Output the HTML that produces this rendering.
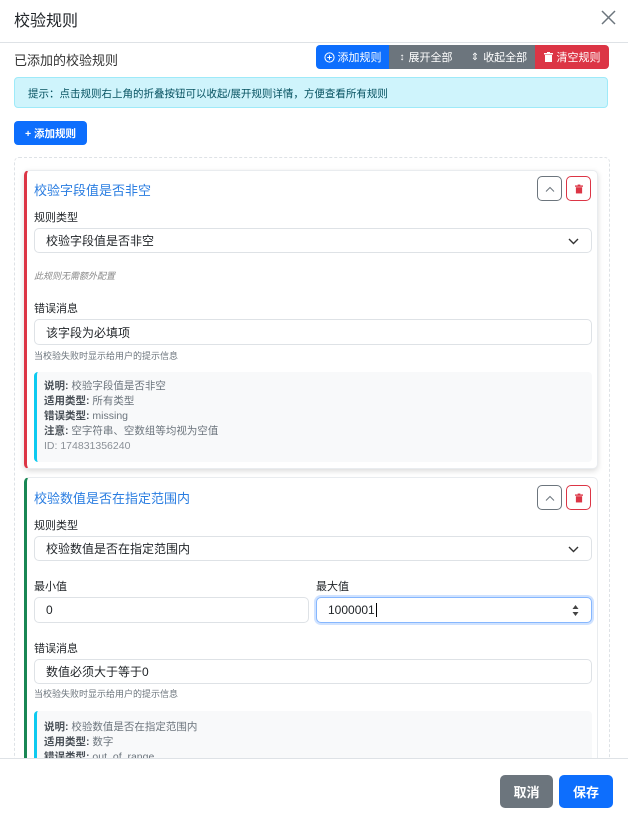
<!DOCTYPE html>
<html style="overflow:hidden;height:815px"><head><meta charset="utf-8"><style>
*{box-sizing:border-box;margin:0;padding:0}
body{width:628px;height:815px;overflow:hidden;background:#fff;font-family:"Liberation Sans","Noto Sans CJK SC",sans-serif;color:#212529;position:relative}
.a{position:absolute;white-space:nowrap}
.btn{position:absolute;display:flex;align-items:center;justify-content:center;color:#fff;font-size:11px}
.inp{position:absolute;border:1px solid #dee2e6;border-radius:5px;background:#fff;font-size:12px;padding-left:11px;display:flex;align-items:center}
.lbl{position:absolute;font-size:11px;white-space:nowrap}
.small{position:absolute;font-size:9px;color:#6c757d;white-space:nowrap}
.ibtn{position:absolute;width:25px;height:25px;border-radius:5px;display:flex;align-items:center;justify-content:center}
.info{position:absolute;background:#f8f9fa;border-left:3px solid #0dcaf0;border-radius:4px;font-size:10.5px;color:#6c757d;padding-left:7px;overflow:hidden}
.info div{position:absolute;left:7px;white-space:nowrap}
.info b{color:#495057}
</style></head><body>
<div class="a" style="left:14px;top:7px;font-size:16px;color:#212529">校验规则</div>
<svg class="a" style="left:601px;top:10px" width="15" height="15" viewBox="0 0 15 15"><path d="M1 1L14 14M14 1L1 14" stroke="#6c757d" stroke-width="1.5"/></svg>
<div class="a" style="left:0;top:42px;width:628px;height:1px;background:#dee2e6"></div>
<div class="a" style="left:14px;top:50px;font-size:13px;color:#333">已添加的校验规则</div>
<div class="btn" style="left:316px;top:45px;width:73px;height:24px;background:#0d6efd;border-radius:4px 0 0 4px"><svg width="11" height="11" viewBox="0 0 12 12" style="margin-right:3px"><circle cx="6" cy="6" r="5" fill="none" stroke="#fff" stroke-width="1.1"/><path d="M6 3.5V8.5M3.5 6H8.5" stroke="#fff" stroke-width="1.1"/></svg>添加规则</div>
<div class="btn" style="left:389px;top:45px;width:74px;height:24px;background:#6c757d"><span style="font-size:10px;margin-right:4px">↕</span>展开全部</div>
<div class="btn" style="left:463px;top:45px;width:72px;height:24px;background:#6c757d"><span style="font-size:10px;margin-right:4px">⇕</span>收起全部</div>
<div class="btn" style="left:535px;top:45px;width:74px;height:24px;background:#dc3545;border-radius:0 4px 4px 0"><svg width="9" height="10" viewBox="0 0 9 10" style="margin-right:4px"><rect x="0" y="1" width="9" height="1.5" fill="#fff"/><rect x="3" y="0" width="3" height="1.5" fill="#fff"/><rect x="1" y="3" width="7" height="7" fill="#fff"/></svg>清空规则</div>
<div class="a" style="left:14px;top:77px;width:594px;height:31px;background:#cff4fc;border:1px solid #9eeaf9;border-radius:4px;font-size:10.5px;color:#055160;padding:8px 0 0 13px">提示：点击规则右上角的折叠按钮可以收起/展开规则详情，方便查看所有规则</div>
<div class="btn" style="left:14px;top:121px;width:73px;height:24px;background:#0d6efd;border-radius:4px;font-weight:bold;font-size:10.5px">+ 添加规则</div>
<div class="a" style="left:14px;top:157px;width:596px;height:640px;border:1px dashed #dee2e6;border-radius:5px"></div>

<!-- card 1 -->
<div class="a" style="left:24px;top:170px;width:574px;height:299px;border:1px solid #e9ecef;border-left:3px solid #dc3545;border-radius:5px;box-shadow:0 2px 6px rgba(0,0,0,.15);background:#fff"></div>
<div class="a" style="left:34px;top:180px;font-size:13px;color:#2a7de1">校验字段值是否非空</div>
<div class="ibtn" style="left:537px;top:176px;border:1px solid #6c757d"><svg width="10" height="6" viewBox="0 0 10 6"><path d="M1 5.5L5 1.5L9 5.5" fill="none" stroke="#6c757d" stroke-width="1"/></svg></div>
<div class="ibtn" style="left:566px;top:176px;border:1px solid #dc3545"><svg width="8" height="10" viewBox="0 0 9 10"><rect x="0" y="1" width="9" height="1.5" fill="#dc3545"/><rect x="3" y="0" width="3" height="1.5" fill="#dc3545"/><rect x="1" y="3" width="7" height="7" fill="#dc3545"/></svg></div>
<div class="lbl" style="left:34px;top:209px">规则类型</div>
<div class="inp" style="left:34px;top:228px;width:558px;height:25px">校验字段值是否非空<svg style="position:absolute;right:12px;top:9px" width="11" height="7" viewBox="0 0 11 7"><path d="M1 1L5.5 5.5L10 1" fill="none" stroke="#333" stroke-width="1.4"/></svg></div>
<div class="small" style="left:34px;top:269px;font-style:italic;color:#888">此规则无需额外配置</div>
<div class="lbl" style="left:34px;top:300px">错误消息</div>
<div class="inp" style="left:34px;top:319px;width:558px;height:26px">该字段为必填项</div>
<div class="small" style="left:34px;top:349px">当校验失败时显示给用户的提示信息</div>
<div class="info" style="left:34px;top:372px;width:558px;height:90px">
<div style="top:6px"><b>说明:</b> 校验字段值是否非空</div>
<div style="top:21px"><b>适用类型:</b> 所有类型</div>
<div style="top:36px"><b>错误类型:</b> missing</div>
<div style="top:51px"><b>注意:</b> 空字符串、空数组等均视为空值</div>
<div style="top:68px;color:#8a9097">ID: 174831356240</div>
</div>

<!-- card 2 -->
<div class="a" style="left:24px;top:477px;width:574px;height:320px;border:1px solid #e9ecef;border-left:3px solid #198754;border-radius:5px;background:#fff"></div>
<div class="a" style="left:34px;top:488px;font-size:13px;color:#2a7de1">校验数值是否在指定范围内</div>
<div class="ibtn" style="left:537px;top:485px;border:1px solid #6c757d"><svg width="10" height="6" viewBox="0 0 10 6"><path d="M1 5.5L5 1.5L9 5.5" fill="none" stroke="#6c757d" stroke-width="1"/></svg></div>
<div class="ibtn" style="left:566px;top:485px;border:1px solid #dc3545"><svg width="8" height="10" viewBox="0 0 9 10"><rect x="0" y="1" width="9" height="1.5" fill="#dc3545"/><rect x="3" y="0" width="3" height="1.5" fill="#dc3545"/><rect x="1" y="3" width="7" height="7" fill="#dc3545"/></svg></div>
<div class="lbl" style="left:34px;top:517px">规则类型</div>
<div class="inp" style="left:34px;top:536px;width:558px;height:25px">校验数值是否在指定范围内<svg style="position:absolute;right:12px;top:9px" width="11" height="7" viewBox="0 0 11 7"><path d="M1 1L5.5 5.5L10 1" fill="none" stroke="#333" stroke-width="1.4"/></svg></div>
<div class="lbl" style="left:34px;top:578px">最小值</div>
<div class="lbl" style="left:316px;top:578px">最大值</div>
<div class="inp" style="left:34px;top:597px;width:275px;height:26px">0</div>
<div class="inp" style="left:316px;top:597px;width:276px;height:26px;border-color:#86b7fe;box-shadow:0 0 0 2px rgba(13,110,253,.2)">1000001<span style="display:inline-block;width:1px;height:14px;background:#000;margin-left:1px"></span><svg style="position:absolute;right:12px;top:6px" width="7" height="13" viewBox="0 0 7 13"><path d="M0.5 5L3.5 1L6.5 5ZM0.5 8L3.5 12L6.5 8Z" fill="#444"/></svg></div>
<div class="lbl" style="left:34px;top:640px">错误消息</div>
<div class="inp" style="left:34px;top:659px;width:558px;height:25px">数值必须大于等于0</div>
<div class="small" style="left:34px;top:687px">当校验失败时显示给用户的提示信息</div>
<div class="info" style="left:34px;top:711px;width:558px;height:60px">
<div style="top:8px"><b>说明:</b> 校验数值是否在指定范围内</div>
<div style="top:23px"><b>适用类型:</b> 数字</div>
<div style="top:38px"><b>错误类型:</b> out_of_range</div>
</div>

<!-- footer -->
<div class="a" style="left:0;top:758px;width:628px;height:57px;background:#fff;border-top:1px solid #dee2e6"></div>
<div class="btn" style="left:500px;top:775px;width:53px;height:33px;background:#6c757d;border-radius:5px;font-size:13px;font-weight:bold">取消</div>
<div class="btn" style="left:559px;top:775px;width:54px;height:33px;background:#0d6efd;border-radius:5px;font-size:13px;font-weight:bold">保存</div>
</body></html>
